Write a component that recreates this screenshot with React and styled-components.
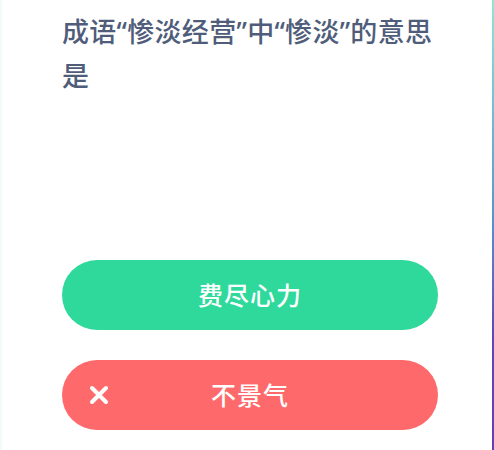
import styled, { createGlobalStyle } from "styled-components";

const Global = createGlobalStyle`
  html, body {
    margin: 0;
    padding: 0;
    background: #ffffff;
  }
  body {
    font-family: "Noto Sans", "Noto Sans CJK SC", sans-serif;
  }
`;

const Frame = styled.div`
  width: 494px;
  height: 450px;
  display: flex;
  background: linear-gradient(180deg, #8fe6d6 0%, #5b9ccf 45%, #5d47b5 75%, #6a3db0 100%);
  padding-right: 2px;
  box-sizing: border-box;
`;

const Card = styled.div`
  flex: 1;
  background: #ffffff;
  border-left: 2px solid #effcfa;
  display: flex;
  flex-direction: column;
  padding: 10px 20px 0 60px;
`;

const Question = styled.h1`
  margin: 0;
  font-family: "Noto Sans", "Noto Sans CJK SC", sans-serif;
  font-size: 27px;
  line-height: 44px;
  font-weight: 500;
  color: #4f5d7a;
  letter-spacing: 0.3px;
  max-width: 395px;
`;

const Options = styled.div`
  width: 376px;
  display: flex;
  flex-direction: column;
  gap: 30px;
  margin-top: 162px;
`;

const Option = styled.div`
  position: relative;
  height: 70px;
  border-radius: 35px;
  background: ${(p) => (p.$wrong ? "#fe6a6b" : "#2fd99c")};
  display: flex;
  align-items: center;
  justify-content: center;
  padding-bottom: 2px;
  box-sizing: border-box;
  color: #ffffff;
  font-family: "Noto Sans CJK SC", sans-serif;
  font-size: 25px;
  font-weight: 500;
  letter-spacing: 1px;
`;

const Mark = styled.svg`
  position: absolute;
  left: 27px;
  top: 50%;
  transform: translateY(-50%);
`;

const Cross = () => (
  <Mark width="20" height="20" viewBox="0 0 20 20">
    <path d="M3 3 L17 17 M17 3 L3 17" stroke="#ffffff" strokeWidth="4" strokeLinecap="round" fill="none" />
  </Mark>
);

export default function App() {
  return (
    <>
      <Global />
      <Frame>
        <Card>
          <Question>成语“惨淡经营”中“惨淡”的意思是</Question>
          <Options>
            <Option>费尽心力</Option>
            <Option $wrong>
              <Cross />
              不景气
            </Option>
          </Options>
        </Card>
      </Frame>
    </>
  );
}
